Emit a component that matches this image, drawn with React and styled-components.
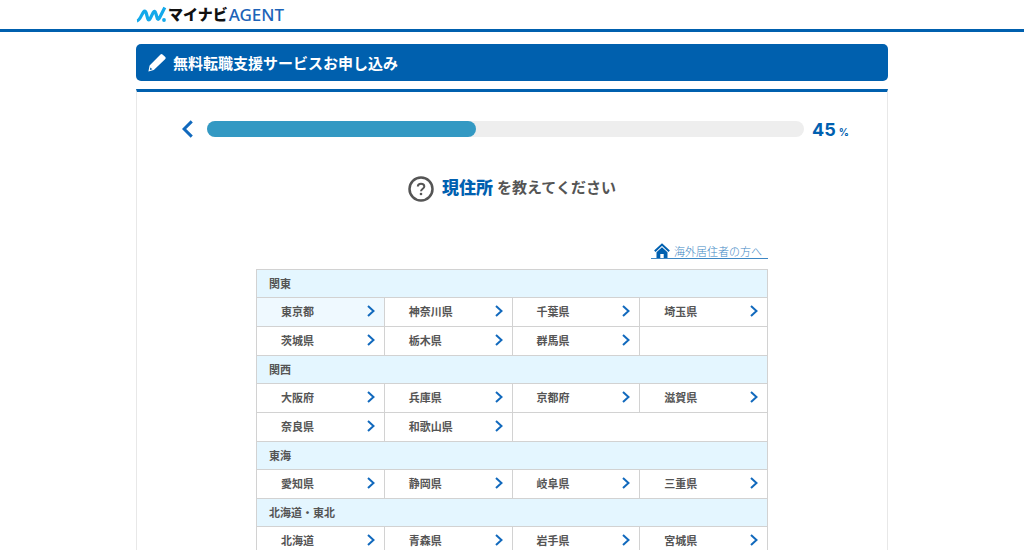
import React from 'react';
import styled, { createGlobalStyle } from 'styled-components';

const GlobalStyle = createGlobalStyle`
  * {
    box-sizing: border-box;
  }

  body {
    margin: 0;
    background: #fff;
    color: #555;
    font-family: "Noto Sans CJK JP", "Noto Sans", sans-serif;
  }

  button {
    font-family: inherit;
  }
`;

const Header = styled.header`
  height: 32px;
  border-bottom: 3px solid #0060ae;
`;

const Inner = styled.div`
  width: 752px;
  max-width: 100%;
  margin: 0 auto;
`;

const Logo = styled.a`
  display: inline-flex;
  align-items: center;
  height: 28px;
  color: #111;
  font-size: 15px;
  font-weight: 900;
  line-height: 28px;
  text-decoration: none;

  svg {
    flex: none;
    margin-right: 1px;
  }
`;

const LogoAgent = styled.span`
  margin-left: 1px;
  padding-top: 2px;
  color: #1d63b8;
  font-family: "Noto Sans", sans-serif;
  font-size: 17px;
  font-weight: 500;
`;

const PageTitle = styled.h1`
  display: flex;
  align-items: center;
  gap: 6px;
  height: 37px;
  margin: 12px 0 8px;
  padding: 0 12px;
  border-radius: 5px;
  background: #0060ae;
  color: #fff;
  font-size: 15px;
  font-weight: 700;
  line-height: 36px;
`;

const Card = styled.section`
  padding: 29px 0 0;
  border: 1px solid #e8e8e8;
  border-top: 3px solid #0060ae;
  border-bottom: 0;
`;

const ProgressRow = styled.div`
  display: flex;
  align-items: center;
  height: 16px;
  padding: 0 39px 0 45px;
`;

const BackButton = styled.button`
  display: flex;
  flex: none;
  margin-right: 13px;
  padding: 0;
  border: 0;
  background: none;
  cursor: pointer;
`;

const Track = styled.div`
  flex: 1;
  height: 16px;
  border-radius: 8px;
  background: #eee;
`;

const Fill = styled.div`
  height: 16px;
  border-radius: 8px;
  background: #3399c3;
`;

const Percent = styled.div`
  flex: none;
  width: 36px;
  margin-left: 8px;
  padding-top: 4px;
  color: #0060b0;
  font-family: Inter, sans-serif;
  font-size: 18px;
  font-weight: 700;
  line-height: 18px;
  white-space: nowrap;

  small {
    margin-left: 3px;
    font-size: 10px;
  }
`;

const Question = styled.h2`
  display: flex;
  align-items: flex-start;
  justify-content: center;
  height: 26px;
  margin: 39px 0 0;
  color: #555;
  font-size: 15px;
  font-weight: 700;
  line-height: 22px;

  svg {
    flex: none;
    margin-right: 8px;
  }

  strong {
    margin-right: 4px;
    color: #0060b0;
    font-size: 17px;
  }
`;

const Areas = styled.div`
  width: 512px;
  max-width: 100%;
  margin: 0 auto;
`;

const OverseasRow = styled.div`
  display: flex;
  justify-content: flex-end;
  margin: 41px 0 10px;
`;

const OverseasLink = styled.a`
  display: flex;
  align-items: center;
  gap: 4px;
  height: 16px;
  padding: 0 6px 0 3px;
  border-bottom: 1px solid #3d87c4;
  color: #3d87c4;
  font-size: 11px;
  font-weight: 300;
  line-height: 16px;
  text-decoration: none;
`;

const AreaTable = styled.table`
  width: 100%;
  table-layout: fixed;
  border-collapse: collapse;
`;

const AreaHead = styled.th`
  height: 28px;
  padding: 0 12px 2px;
  border: 1px solid #d2d2d2;
  background: #e4f6ff;
  font-size: 11px;
  font-weight: 700;
  line-height: 16px;
  text-align: left;
`;

const AreaCell = styled.td`
  height: 29px;
  padding: 0;
  border: 1px solid #d2d2d2;
`;

const PrefButton = styled.button`
  display: flex;
  align-items: center;
  justify-content: space-between;
  width: 100%;
  height: 28px;
  padding: 0 9px 2px 24px;
  border: 0;
  background: ${props => (props.$active ? '#eff9ff' : '#fff')};
  color: #555;
  font-size: 11px;
  font-weight: 700;
  line-height: 16px;
  cursor: pointer;

  &:hover {
    background: #eff9ff;
  }
`;

const areas = [
  {
    name: '関東',
    rows: [
      ['東京都', '神奈川県', '千葉県', '埼玉県'],
      ['茨城県', '栃木県', '群馬県'],
    ],
  },
  {
    name: '関西',
    rows: [
      ['大阪府', '兵庫県', '京都府', '滋賀県'],
      ['奈良県', '和歌山県'],
    ],
  },
  { name: '東海', rows: [['愛知県', '静岡県', '岐阜県', '三重県']] },
  { name: '北海道・東北', rows: [['北海道', '青森県', '岩手県', '宮城県']] },
];

const LogoMark = () => (
  <svg width="31" height="18" viewBox="0 0 31 18" fill="none" aria-hidden="true">
    <path
      d="M1 15.800C4 15.500 5.500 9.500 7.500 7C8.700 5.500 9.700 6 10.200 8L11.700 13.500C12.200 15.500 13.200 15.500 14.200 13.500L17.200 7.500C18.200 5.700 19.200 6 19.700 8L21.200 13C21.700 15 22.700 14.500 23.700 12.500L28.800 2.500"
      stroke="#14a9ea"
      strokeWidth="3.200"
      strokeLinejoin="round"
    />
    <circle cx="28" cy="15" r="1.900" fill="#14a9ea" />
  </svg>
);

const Pencil = () => (
  <svg width="19" height="19" viewBox="0 0 19 19" fill="#fff" aria-hidden="true">
    <path d="M12.500 1.500Q13.500 .6 14.500 1.500L17.300 4.100Q18.200 5.100 17.300 6.100L5.800 17L.4 18.400L1.600 12.400ZM2.300 14.500L1.900 16.900L4.400 16.300Z" />
  </svg>
);

const Chevron = ({ back }) => (
  <svg
    width={back ? 12 : 8}
    height={back ? 18 : 12}
    viewBox="0 0 8 12"
    fill="none"
    stroke="#1169bd"
    strokeWidth="2"
    aria-hidden="true"
  >
    <path d={back ? 'M6.500 .9L1.400 6L6.500 11.100' : 'M1 .9L6.500 6L1 11.100'} />
  </svg>
);

const QuestionIcon = () => (
  <svg width="26" height="26" viewBox="0 0 26 26" fill="none" stroke="#555" aria-hidden="true">
    <circle cx="13" cy="13" r="11.500" strokeWidth="2.500" />
    <path d="M9.800 10.500C9.900 8.600 11.200 7.700 13 7.700C15 7.700 16.300 8.800 16.300 10.400C16.300 12.700 13 12.700 13 15.300" strokeWidth="2" />
    <circle cx="13" cy="18" r="1.300" fill="#555" stroke="none" />
  </svg>
);

const HomeIcon = () => (
  <svg width="16" height="15" viewBox="0 0 16 15" aria-hidden="true">
    <path d="M.8 8.200L8 1.500L15.200 8.200" fill="none" stroke="#0060b0" strokeWidth="2" />
    <path d="M8 4.200L13.500 9.200V15H9.700V11H6.300V15H2.500V9.200Z" fill="#0060b0" />
  </svg>
);

const AreaRow = ({ prefs }) => (
  <tr>
    {prefs.map(pref => (
      <AreaCell key={pref}>
        <PrefButton type="button" $active={pref === '東京都'}>
          {pref}
          <Chevron />
        </PrefButton>
      </AreaCell>
    ))}
    {prefs.length < 4 && <AreaCell colSpan={4 - prefs.length} />}
  </tr>
);

const App = () => {
  const percent = 45;

  return (
    <>
      <GlobalStyle />
      <Header>
        <Inner>
          <Logo href="#">
            <LogoMark />
            マイナビ
            <LogoAgent>AGENT</LogoAgent>
          </Logo>
        </Inner>
      </Header>
      <Inner as="main">
        <PageTitle>
          <Pencil />
          無料転職支援サービスお申し込み
        </PageTitle>
        <Card>
          <ProgressRow>
            <BackButton type="button" aria-label="戻る">
              <Chevron back />
            </BackButton>
            <Track>
              <Fill style={{ width: `${percent}%` }} />
            </Track>
            <Percent>
              {percent}
              <small>%</small>
            </Percent>
          </ProgressRow>
          <Question>
            <QuestionIcon />
            <strong>現住所</strong>
            を教えてください
          </Question>
          <Areas>
            <OverseasRow>
              <OverseasLink href="#">
                <HomeIcon />
                海外居住者の方へ
              </OverseasLink>
            </OverseasRow>
            <AreaTable>
              {areas.map(area => (
                <tbody key={area.name}>
                  <tr>
                    <AreaHead colSpan={4} scope="rowgroup">
                      {area.name}
                    </AreaHead>
                  </tr>
                  {area.rows.map(prefs => (
                    <AreaRow key={prefs[0]} prefs={prefs} />
                  ))}
                </tbody>
              ))}
            </AreaTable>
          </Areas>
        </Card>
      </Inner>
    </>
  );
};

export default App;
